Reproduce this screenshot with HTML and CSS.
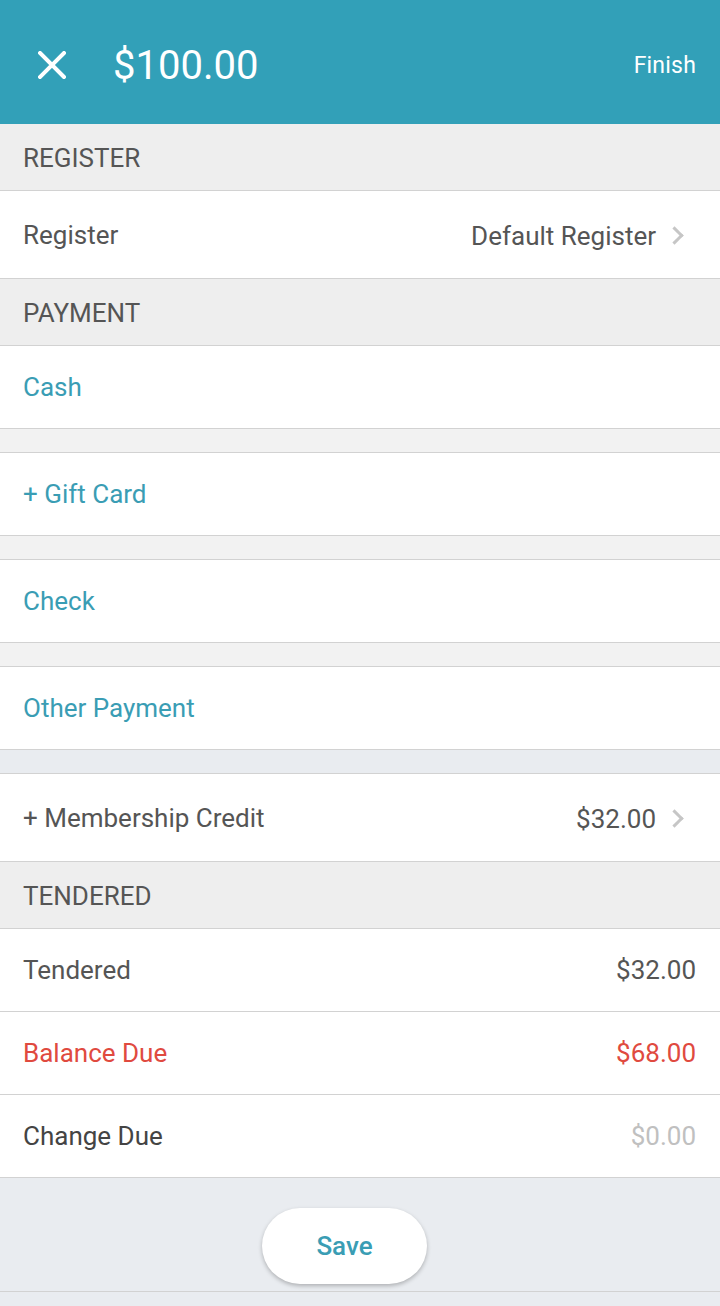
FILE: index.html
```html
<!DOCTYPE html>
<html lang="en">
<head>
    <meta charset="UTF-8">
    <meta name="viewport" content="width=device-width, initial-scale=1.0">
    <title>Checkout</title>
    <link rel="stylesheet" href="styles.css">
</head>
<body>

  <div class="topbar">
    <svg class="close" width="28" height="28" viewBox="0 0 28 28">
      <path d="M2 2 L26 26 M26 2 L2 26" stroke="#fff" stroke-width="4" stroke-linecap="square"/>
    </svg>
    <div class="total">$100.00</div>
    <div class="finish">Finish</div>
  </div>

  <div class="section-title">REGISTER</div>
  <div class="row tall">
    <span>Register</span>
    <span class="value">Default Register <span class="chev"></span></span>
  </div>

  <div class="section-title">PAYMENT</div>
  <div class="row link">Cash</div>
  <div class="gap"></div>
  <div class="row link">+ Gift Card</div>
  <div class="gap"></div>
  <div class="row link">Check</div>
  <div class="gap"></div>
  <div class="row link">Other Payment</div>
  <div class="gap blue"></div>
  <div class="row tall">
    <span>+ Membership Credit</span>
    <span class="value">$32.00 <span class="chev"></span></span>
  </div>

  <div class="section-title">TENDERED</div>
  <div class="row end">
    <span>Tendered</span>
    <span>$32.00</span>
  </div>
  <div class="row end due">
    <span>Balance Due</span>
    <span>$68.00</span>
  </div>
  <div class="row end">
    <span class="dark">Change Due</span>
    <span class="muted">$0.00</span>
  </div>

  <div class="footer">
    <button class="save">Save</button>
  </div>

</body>
</html>
```

FILE: styles.css
```css
body {
  box-sizing: border-box;
  margin: 0;
  padding: 0;
  font-family: Roboto, "Liberation Sans", sans-serif;
  background-color: #e9ecf0;
  color: #555;
}

.topbar {
  display: flex;
  align-items: center;
  height: 124px;
  background-color: #32a0b8;
  color: #fff;
  padding: 6px 24px 0 38px;
  box-sizing: border-box;
}

.close {
  margin-right: 47px;
}

.total {
  font-size: 40px;
  flex: 1;
}

.finish {
  font-size: 23px;
  letter-spacing: 0.2px;
}

.section-title {
  height: 64px;
  line-height: 64px;
  padding-top: 2px;
  background-color: #eeeeee;
  border-bottom: 1px solid #d2d2d2;
  padding-left: 23px;
  font-size: 26px;
}

.row {
  display: flex;
  align-items: center;
  justify-content: space-between;
  height: 82px;
  background-color: #fff;
  border-bottom: 1px solid #d2d2d2;
  padding: 0 24px 0 23px;
  font-size: 26px;
}

.row.tall {
  height: 87px;
  padding-right: 36px;
}

.row.link {
  color: #3a9db4;
}

.value {
  display: flex;
  align-items: center;
  padding-top: 2px;
}

.chev {
  display: inline-block;
  width: 10px;
  height: 10px;
  border-top: 3px solid #c6c6c6;
  border-right: 3px solid #c6c6c6;
  transform: rotate(45deg);
  margin-left: 12px;
  margin-right: 3px;
}

.gap {
  height: 23px;
  background-color: #f2f2f2;
  border-bottom: 1px solid #d2d2d2;
}

.gap.blue {
  background-color: #e9ecf0;
}

.due {
  color: #e04a3f;
}

.dark {
  color: #444;
}

.muted {
  color: #c0c0c0;
}

.footer {
  display: flex;
  justify-content: center;
  align-items: flex-start;
  height: 114px;
  padding: 30px 31px 0 0;
  border-bottom: 1px solid #d2d2d2;
  box-sizing: border-box;
}

.save {
  width: 165px;
  height: 76px;
  border: none;
  border-radius: 38px;
  background-color: #fff;
  color: #3a9db4;
  font-family: Roboto, "Liberation Sans", sans-serif;
  font-size: 26px;
  font-weight: 500;
  box-shadow: 0 2px 4px rgba(0,0,0,0.25);
  cursor: pointer;
}
```
